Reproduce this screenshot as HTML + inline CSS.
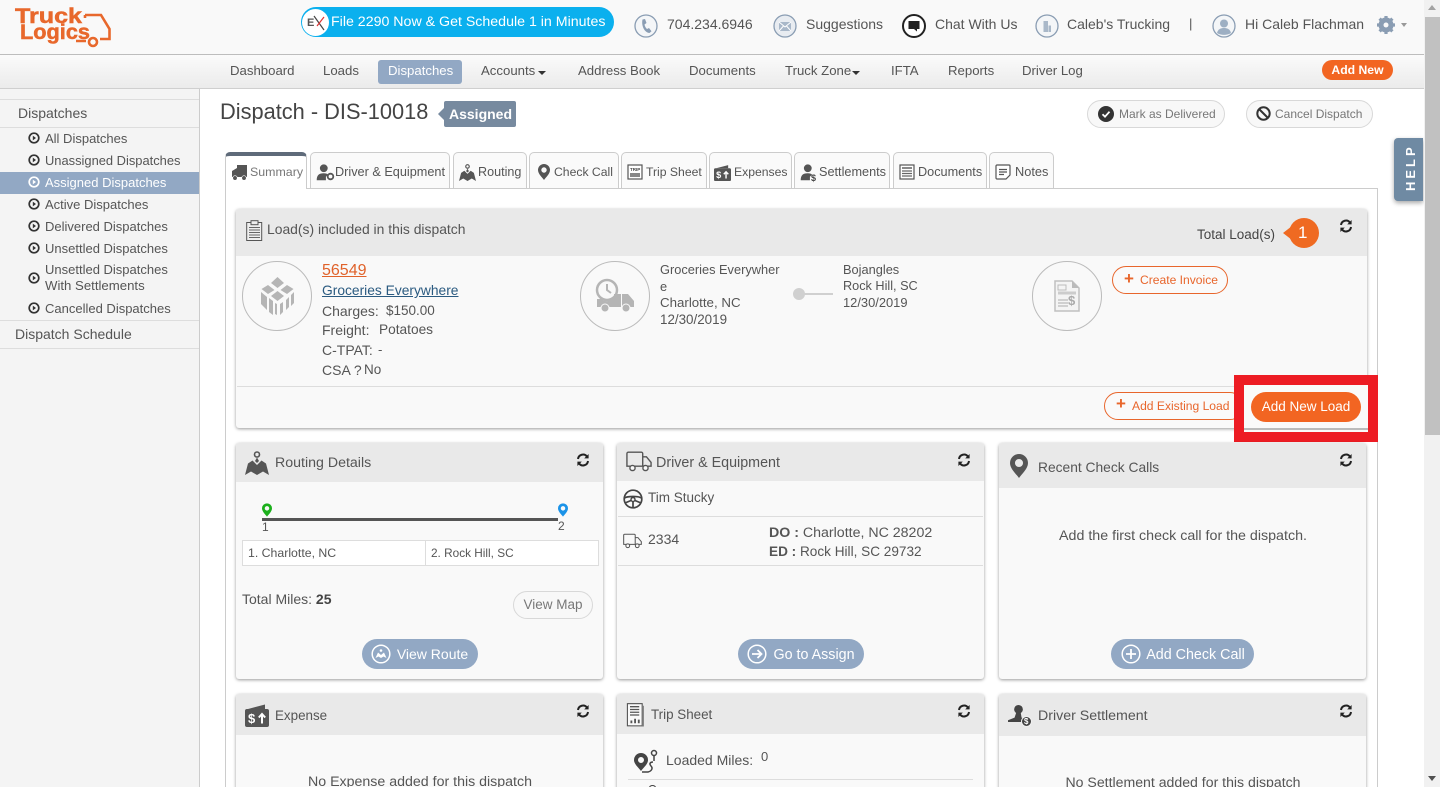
<!DOCTYPE html>
<html><head><meta charset="utf-8"><title>Dispatch - DIS-10018</title>
<style>
html,body{margin:0;padding:0;width:1440px;height:787px;overflow:hidden;background:#fff}
body{position:relative;font-family:"Liberation Sans",sans-serif;font-size:13.2px;color:#555}
.a{position:absolute;box-sizing:border-box}
.t{position:absolute;white-space:nowrap;line-height:20px;height:20px;color:#555;margin-top:1px}
.h{font-size:14px}
.c{text-align:center;transform:translateX(-50%)}
.line{position:absolute;height:1px;background:#ddd}
.tab{position:absolute;top:152px;height:36px;box-sizing:border-box;border:1px solid #ccc;border-bottom:0;border-radius:5px 5px 0 0;background:#fafafa}
.card{position:absolute;background:#f9f9f9;border-radius:3px;box-shadow:0 1px 3px rgba(0,0,0,.4)}
.head{position:absolute;left:0;top:0;right:0;background:#e9e9e9;border-radius:3px 3px 0 0}
.pill{position:absolute;box-sizing:border-box;border-radius:16px;text-align:center;white-space:nowrap}
.blue{background:#92a8c4;color:#fff;font-size:14.3px;line-height:31px;height:30px;top:639px}
.outl{border:1px solid #e8662c;background:#fafafa;color:#e8662c;font-size:12.1px;line-height:26px;height:28px}
.grey{border:1px solid #d8d8d8;background:#f8f8f8;color:#777;font-size:12px;line-height:26px;height:28px;text-align:left}
svg{position:absolute;overflow:visible}
</style></head><body>
<svg width="0" height="0" style="position:absolute"><defs>
<symbol id="sync" viewBox="0 0 14 14"><path d="M2 6A5 5 0 0 1 11 3.600M12 8A5 5 0 0 1 3 10.400" fill="none" stroke="#222" stroke-width="2"/><path d="M12.600 1v4.400H8.200zM1.400 13V8.600h4.400z" fill="#222"/></symbol>
<symbol id="play" viewBox="0 0 12 12"><circle cx="6" cy="6" r="4.800" fill="none" stroke="currentColor" stroke-width="1.700"/><path d="M4.800 3.600 8 6 4.800 8.400z" fill="currentColor"/></symbol>
<symbol id="pin" viewBox="0 0 12 16"><path fill-rule="evenodd" d="M6 0a6 6 0 0 1 6 6c0 3.800-4 7.200-6 10C4 13.200 0 9.800 0 6a6 6 0 0 1 6-6zm0 3.300a2.700 2.700 0 1 0 0 5.400 2.700 2.700 0 0 0 0-5.400z" fill="currentColor"/></symbol>
<symbol id="map" viewBox="0 0 24 24"><circle cx="12" cy="3.500" r="2.500" fill="none" stroke="currentColor" stroke-width="1.600"/><path d="M12 6.500 14 10l-2 2-2-2zM0 24 3 12.500 7.500 9.500 12 14l4.500-4.500L21 12.500 24 24l-6-3.500-6 3.500-6-3.500z" fill="currentColor"/></symbol>
<symbol id="truckO" viewBox="0 0 28 22"><path d="M2.500 1h14a1.500 1.500 0 0 1 1.500 1.500V16H1V2.500A1.500 1.500 0 0 1 2.500 1zM18 6h4l5 6v4h-9" fill="none" stroke="#555" stroke-width="1.500"/><circle cx="7" cy="18" r="2.800" fill="#f9f9f9" stroke="#555" stroke-width="1.500"/><circle cx="21" cy="18" r="2.800" fill="#f9f9f9" stroke="#555" stroke-width="1.500"/></symbol>
<symbol id="exp" viewBox="0 0 24 24"><path d="M3 6 20 1.500V6z" fill="#555"/><rect x="0" y="6" width="24" height="18" rx="2" fill="#555"/><text x="3" y="20" font-family="Liberation Sans" font-weight="bold" font-size="13" fill="#fff">$</text><path d="M17 20.500V11.500M13.800 14.500l3.200-3.500 3.200 3.500" fill="none" stroke="#fff" stroke-width="2"/></symbol>
<symbol id="sheet" viewBox="0 0 20 26"><rect x=".7" y=".7" width="16" height="24" fill="#f9f9f9" stroke="#555" stroke-width="1.200"/><path d="M3.500 4h10M3.500 7h10M3.500 10h10M3.500 13h10" stroke="#555" stroke-width="1.400"/><path d="M4 22v-3h2v3zM8 22v-5h2v5zM12 22v-4h2v4z" fill="#555"/><path d="M18 3v22H4" fill="none" stroke="#777"/></symbol>
<symbol id="person" viewBox="0 0 24 24"><circle cx="11" cy="6" r="5.500" fill="currentColor"/><path d="M1 23c0-7 3-10 10-10 3 0 5 .6 6 2l-3 3v5z" fill="currentColor"/></symbol>
</defs></svg>

<!-- header -->
<div class="a" style="left:0;top:0;width:1424px;height:54px;background:#f9f9f9"></div>
<div class="a" style="left:0;top:54px;width:1424px;height:1px;background:#bdbdbd"></div>
<div class="a" style="left:0;top:55px;width:1424px;height:33px;background:linear-gradient(#fbfbfb,#ebebeb)"></div>
<div class="a" style="left:0;top:88px;width:1424px;height:1px;background:#cfcfcf"></div>

<!-- logo -->
<svg style="left:14px;top:5px" width="98" height="46" viewBox="0 0 98 46">
<path d="M71 10H87L95.500 24V34H86M72 36H62M71 10v3" fill="none" stroke="#e8682c" stroke-width="2.600"/>
<circle cx="79" cy="37" r="4" fill="#f9f9f9" stroke="#e8682c" stroke-width="2.600"/>
<text x="1" y="18" font-family="Liberation Sans" font-weight="bold" font-size="21" fill="#e8682c" stroke="#e8682c" stroke-width=".5" textLength="67" lengthAdjust="spacingAndGlyphs">Truck</text>
<text x="6" y="34" font-family="Liberation Sans" font-weight="bold" font-size="21" fill="#e8682c" stroke="#e8682c" stroke-width=".5" textLength="70" lengthAdjust="spacingAndGlyphs">Logics</text>
</svg>

<!-- 2290 pill -->
<div class="a" style="left:301px;top:7px;width:313px;height:30px;border-radius:15px;background:#0bb0ee"></div>
<div class="a" style="left:302px;top:9px;width:27px;height:27px;border-radius:50%;background:#fff"></div>
<div class="t" style="left:307px;top:12px;font-size:11px;color:#555;font-weight:bold">E</div>
<svg style="left:313px;top:15px" width="13" height="16" viewBox="0 0 13 16"><path d="M1 1 11 15" stroke="#444" stroke-width="1.200"/><path d="M11 2 4 11" stroke="#d33" stroke-width="1.200"/></svg>
<div class="t" style="left:331px;top:11px;color:#fff;font-size:14.2px">File 2290 Now &amp; Get Schedule 1 in Minutes</div>

<!-- top icons -->
<svg style="left:634px;top:14px" width="24" height="24" viewBox="0 0 24 24"><circle cx="12" cy="12" r="11" fill="#f4f6f8" stroke="#8a9db3" stroke-width="1.300"/><path d="M8.500 5.500 11 5l1.500 4-2 1.500c.4 2 1.300 3.400 2.500 4.500l2-1 2.500 3.300-2 1.700C11 19 7 12 8.500 5.500z" fill="#8a9db3"/></svg>
<div class="t h" style="left:667px;top:13px">704.234.6946</div>
<svg style="left:773px;top:14px" width="24" height="24" viewBox="0 0 24 24"><circle cx="12" cy="12" r="11" fill="#e8ecf1" stroke="#8a9db3" stroke-width="1.300"/><rect x="6" y="8" width="12" height="9" fill="#a9b8c9"/><path d="M6 8l6 5 6-5M6 17l4.500-5M18 17l-4.500-5" fill="none" stroke="#fff"/></svg>
<div class="t h" style="left:806px;top:13px">Suggestions</div>
<svg style="left:902px;top:14px" width="24" height="24" viewBox="0 0 24 24"><circle cx="12" cy="12" r="11" fill="#fff" stroke="#222" stroke-width="2"/><path d="M6.500 7h11v8h-2.500v2.500L12 15H6.500z" fill="#222"/></svg>
<div class="t h" style="left:935px;top:13px">Chat With Us</div>
<svg style="left:1035px;top:14px" width="24" height="24" viewBox="0 0 24 24"><circle cx="12" cy="12" r="11" fill="#f4f6f8" stroke="#8a9db3" stroke-width="1.300"/><path d="M8.500 7h4.500v11H8.500zM13.500 11.500h2.500V18h-2.500z" fill="#a9b8c9"/></svg>
<div class="t h" style="left:1067px;top:13px">Caleb's Trucking</div>
<div class="t" style="left:1189px;top:13px">|</div>
<svg style="left:1212px;top:14px" width="24" height="24" viewBox="0 0 24 24"><circle cx="12" cy="12" r="11" fill="#f4f6f8" stroke="#8a9db3" stroke-width="1.300"/><circle cx="12" cy="9.500" r="4" fill="#9dafc3"/><path d="M5 19c1-4 4-5 7-5s6 1 7 5c-4 2.500-10 2.500-14 0z" fill="#9dafc3"/></svg>
<div class="t h" style="left:1245px;top:13px">Hi Caleb Flachman</div>
<svg style="left:1376px;top:15px" width="20" height="20" viewBox="0 0 20 20"><circle cx="10" cy="10" r="5.500" fill="none" stroke="#8a9db3" stroke-width="4"/><path d="M10 1v18M1 10h18M3.600 3.600l12.800 12.800M16.400 3.600 3.600 16.400" stroke="#8a9db3" stroke-width="3.200"/><circle cx="10" cy="10" r="2.500" fill="#f9f9f9"/></svg>
<div class="a" style="left:1401px;top:23px;border:3.500px solid transparent;border-top:4px solid #999"></div>

<!-- nav -->
<div class="t" style="left:230px;top:60px">Dashboard</div>
<div class="t" style="left:323px;top:60px">Loads</div>
<div class="a" style="left:378px;top:60px;width:84px;height:24px;border-radius:3px;background:#92a8c4"></div>
<div class="t" style="left:388px;top:60px;color:#fff">Dispatches</div>
<div class="t" style="left:481px;top:60px">Accounts</div>
<div class="a" style="left:538px;top:71px;border:4.500px solid transparent;border-top:4px solid #333"></div>
<div class="t" style="left:578px;top:60px">Address Book</div>
<div class="t" style="left:689px;top:60px">Documents</div>
<div class="t" style="left:785px;top:60px">Truck Zone</div>
<div class="a" style="left:852px;top:71px;border:4.500px solid transparent;border-top:4px solid #333"></div>
<div class="t" style="left:891px;top:60px">IFTA</div>
<div class="t" style="left:948px;top:60px">Reports</div>
<div class="t" style="left:1022px;top:60px">Driver Log</div>
<div class="pill" style="left:1322px;top:60px;width:71px;height:20px;background:#f26522;color:#fff;line-height:20px;font-size:12.2px;font-weight:bold">Add New</div>

<!-- sidebar -->
<div class="a" style="left:0;top:89px;width:200px;height:698px;background:#f4f4f4;border-right:1px solid #ccc"></div>
<div class="line" style="left:0;top:99px;width:199px"></div>
<div class="line" style="left:0;top:127px;width:199px"></div>
<div class="line" style="left:0;top:320px;width:199px"></div>
<div class="line" style="left:0;top:348px;width:199px"></div>
<div class="t h" style="left:18px;top:102px">Dispatches</div>
<div class="a" style="left:0;top:172px;width:199px;height:22px;background:#92a8c4"></div>
<svg style="left:28px;top:132px;color:#333" width="12" height="12"><use href="#play"/></svg><div class="t" style="left:45px;top:128px;font-size:13px">All Dispatches</div>
<svg style="left:28px;top:154px;color:#333" width="12" height="12"><use href="#play"/></svg><div class="t" style="left:45px;top:150px;font-size:12.9px">Unassigned Dispatches</div>
<svg style="left:28px;top:176px;color:#fff" width="12" height="12"><use href="#play"/></svg><div class="t" style="left:45px;top:172px;font-size:13px;color:#fff">Assigned Dispatches</div>
<svg style="left:28px;top:198px;color:#333" width="12" height="12"><use href="#play"/></svg><div class="t" style="left:45px;top:194px;font-size:13px">Active Dispatches</div>
<svg style="left:28px;top:220px;color:#333" width="12" height="12"><use href="#play"/></svg><div class="t" style="left:45px;top:216px;font-size:13px">Delivered Dispatches</div>
<svg style="left:28px;top:242px;color:#333" width="12" height="12"><use href="#play"/></svg><div class="t" style="left:45px;top:238px;font-size:13px">Unsettled Dispatches</div>
<svg style="left:28px;top:272px;color:#333" width="12" height="12"><use href="#play"/></svg><div class="t" style="left:45px;top:259px;font-size:13px">Unsettled Dispatches</div><div class="t" style="left:45px;top:275px;font-size:13.2px">With Settlements</div>
<svg style="left:28px;top:302px;color:#333" width="12" height="12"><use href="#play"/></svg><div class="t" style="left:45px;top:298px;font-size:13px">Cancelled Dispatches</div>
<div class="t h" style="left:15px;top:323px">Dispatch Schedule</div>

<!-- title -->
<div class="t" style="left:220px;top:101px;font-size:21.8px;color:#444">Dispatch - DIS-10018</div>
<div class="a" style="left:444px;top:101px;width:72px;height:26px;background:#778a9f;border-radius:2px"></div>
<div class="a" style="left:438px;top:108px;border:6px solid transparent;border-right:6px solid #778a9f;border-left:0"></div>
<div class="t" style="left:449px;top:103px;color:#fff;font-size:14px;font-weight:bold">Assigned</div>
<div class="pill grey" style="left:1087px;top:100px;width:138px;padding-left:31px">Mark as Delivered</div>
<svg style="left:1098px;top:106px" width="16" height="16" viewBox="0 0 16 16"><circle cx="8" cy="8" r="8" fill="#333"/><path d="M4.500 8.200 7 10.700l4.500-5" fill="none" stroke="#fff" stroke-width="1.800"/></svg>
<div class="pill grey" style="left:1246px;top:100px;width:127px;padding-left:28px">Cancel Dispatch</div>
<svg style="left:1256px;top:106px" width="15" height="15" viewBox="0 0 15 15"><circle cx="7.500" cy="7.500" r="6.200" fill="none" stroke="#333" stroke-width="2"/><path d="M3 3l9 9" stroke="#333" stroke-width="2"/></svg>

<!-- help -->
<div class="a" style="left:1394px;top:138px;width:29px;height:63px;background:#6f8aa3;border-radius:4px 0 0 4px;box-shadow:0 2px 5px rgba(0,0,0,.35)"></div>
<div class="t" style="left:1391px;top:160px;width:40px;text-align:center;color:#fff;font-weight:bold;font-size:13px;letter-spacing:3px;transform:rotate(-90deg)">HELP</div>

<!-- pane -->
<div class="a" style="left:225px;top:188px;width:1153px;height:610px;border:1px solid #ccc;background:#fff"></div>

<!-- tabs -->
<div class="tab" style="left:225px;width:82px;background:#fff;border-top:4px solid #5f6b7a;height:37px"></div>
<div class="tab" style="left:310px;width:140px"></div>
<div class="tab" style="left:453px;width:74px"></div>
<div class="tab" style="left:529px;width:90px"></div>
<div class="tab" style="left:621px;width:86px"></div>
<div class="tab" style="left:709px;width:83px"></div>
<div class="tab" style="left:794px;width:96px"></div>
<div class="tab" style="left:893px;width:94px"></div>
<div class="tab" style="left:989px;width:65px"></div>
<svg style="left:231px;top:164px" width="17" height="17" viewBox="0 0 17 17"><path d="M6 1h10v12H1V7l5-3z" fill="#555"/><circle cx="4" cy="14" r="2.300" fill="#555" stroke="#fff" stroke-width=".7"/><circle cx="13" cy="14" r="2.300" fill="#555" stroke="#fff" stroke-width=".7"/></svg>
<div class="t" style="left:250px;top:161px;font-size:12.4px;color:#777">Summary</div>
<svg style="left:316px;top:164px;color:#555" width="17" height="17"><use href="#person"/></svg><svg style="left:326px;top:172px" width="9" height="9" viewBox="0 0 9 9"><circle cx="4.500" cy="4.500" r="2.800" fill="none" stroke="#555" stroke-width="1.800"/></svg>
<div class="t" style="left:335px;top:161px;font-size:12.7px">Driver &amp; Equipment</div>
<svg style="left:459px;top:164px;color:#555" width="17" height="17"><use href="#map"/></svg>
<div class="t" style="left:478px;top:161px;font-size:12.6px">Routing</div>
<svg style="left:538px;top:164px;color:#555" width="12" height="16"><use href="#pin"/></svg>
<div class="t" style="left:554px;top:161px;font-size:12.2px">Check Call</div>
<svg style="left:627px;top:164px" width="16" height="16" viewBox="0 0 16 16"><rect x="1" y="1" width="14" height="14" fill="#fff" stroke="#555" stroke-width="1.200"/><path d="M3 9h10v4H3z" fill="#888"/><text x="3" y="7" font-family="Liberation Sans" font-weight="bold" font-size="4.500" fill="#444">TRIP</text></svg>
<div class="t" style="left:646px;top:161px;font-size:12.2px">Trip Sheet</div>
<svg style="left:714px;top:164px" width="17" height="17"><use href="#exp"/></svg>
<div class="t" style="left:734px;top:161px;font-size:12.2px">Expenses</div>
<svg style="left:800px;top:164px;color:#555" width="17" height="17"><use href="#person"/></svg><div class="t" style="left:811px;top:167px;font-size:9px;font-weight:bold;color:#444">$</div>
<div class="t" style="left:819px;top:161px;font-size:12.7px">Settlements</div>
<svg style="left:899px;top:164px" width="16" height="16" viewBox="0 0 16 16"><rect x="1" y="1" width="14" height="14" fill="#fff" stroke="#555" stroke-width="1.200"/><path d="M3 7h10M3 9.500h10M3 12h10" stroke="#666" stroke-width="1.300"/><path d="M3 3h10v2H3z" fill="#888"/></svg>
<div class="t" style="left:918px;top:161px;font-size:12.7px">Documents</div>
<svg style="left:995px;top:164px" width="16" height="16" viewBox="0 0 16 16"><path d="M2 1h12a1 1 0 0 1 1 1v9l-4 4H2a1 1 0 0 1-1-1V2a1 1 0 0 1 1-1z" fill="#fff" stroke="#555" stroke-width="1.200"/><path d="M4 5.500h8M4 8h8M4 10.500h5" stroke="#555" stroke-width="1.200"/></svg>
<div class="t" style="left:1015px;top:161px;font-size:12.8px">Notes</div>

<!-- card 1 -->
<div class="card" style="left:236px;top:209px;width:1131px;height:219px"><div class="head" style="height:47px"></div></div>
<svg style="left:246px;top:220px" width="17" height="21" viewBox="0 0 17 21"><rect x=".7" y="2.500" width="15" height="18" fill="#eee" stroke="#555"/><rect x="5" y=".7" width="7" height="4" fill="#eee" stroke="#555"/><path d="M3 7.500h11M3 10h11M3 12.500h11M3 15h11M3 17.500h11" stroke="#666"/></svg>
<div class="t" style="left:267px;top:218px;font-size:13.9px">Load(s) included in this dispatch</div>
<div class="t" style="left:1197px;top:224px;color:#444;font-size:13.5px">Total Load(s)</div>
<div class="a" style="left:1289px;top:218px;width:30px;height:30px;border-radius:50%;background:#ef6a22"></div>
<div class="a" style="left:1283px;top:226px;border:7px solid transparent;border-right:9px solid #ef6a22;border-left:0"></div>
<div class="t" style="left:1298px;top:222px;color:#fff;font-size:17px">1</div>
<svg style="left:1339px;top:219px" width="14" height="14"><use href="#sync"/></svg>

<div class="a" style="left:242px;top:261px;width:70px;height:70px;border-radius:50%;border:1px solid #bbb"></div>
<svg style="left:260px;top:277px" width="35" height="38" viewBox="0 0 35 38"><path d="M17.500 0 24 6l-6.500 5L11 6zM8 8l6.500 5L8 17 1.500 12zM27 8l6.500 4-6.500 5-6.500-4zM17.500 14l6.500 5-6.500 5-6.500-5z" fill="#b5b5b5"/><path d="M1 15l6 5v13l-6-6zM9 21l4 3v14l-4-3zM15 26l2 1v11l-2-1zM20 27l3-2v10l-3 3zM26 23l3-3v10l-3 3zM31 18l3-3v11l-3 3z" fill="#b5b5b5"/></svg>
<div class="t" style="left:322px;top:260px;font-size:16px;color:#e0622a;text-decoration:underline">56549</div>
<div class="t" style="left:322px;top:280px;font-size:13.8px;color:#2a5a80;text-decoration:underline">Groceries Everywhere</div>
<div class="t" style="left:322px;top:300px;font-size:14px">Charges:</div><div class="t" style="left:386px;top:300px;font-size:13.5px">$150.00</div>
<div class="t" style="left:322px;top:319px;font-size:14px">Freight:</div><div class="t" style="left:379px;top:319px;font-size:13.7px">Potatoes</div>
<div class="t" style="left:322px;top:339px;font-size:14px">C-TPAT:</div><div class="t" style="left:378px;top:339px">-</div>
<div class="t" style="left:322px;top:359px;font-size:14px">CSA ?</div><div class="t" style="left:364px;top:359px;font-size:13.5px">No</div>

<div class="a" style="left:580px;top:261px;width:70px;height:70px;border-radius:50%;border:1px solid #bbb"></div>
<svg style="left:596px;top:279px" width="39" height="36" viewBox="0 0 39 36"><circle cx="11" cy="11" r="10" fill="#f9f9f9" stroke="#b5b5b5" stroke-width="2.500"/><path d="M11 5v6l4 3" fill="none" stroke="#b5b5b5" stroke-width="2"/><path d="M1 20h4c3 3 9 3 13-1v-4h7v13H1zM26 15h6l6 7v6H26z" fill="#b5b5b5"/><circle cx="9" cy="29" r="4" fill="#b5b5b5" stroke="#f9f9f9"/><circle cx="30" cy="29" r="4" fill="#b5b5b5" stroke="#f9f9f9"/></svg>
<div class="t" style="left:660px;top:259px;font-size:12.8px">Groceries Everywher</div>
<div class="t" style="left:660px;top:276px;font-size:12.8px">e</div>
<div class="t" style="left:660px;top:292px;font-size:13.3px">Charlotte, NC</div>
<div class="t" style="left:660px;top:309px;font-size:13.4px">12/30/2019</div>
<div class="a" style="left:793px;top:288px;width:12px;height:12px;border-radius:50%;background:#d0d0d0"></div>
<div class="a" style="left:800px;top:293px;width:33px;height:2px;background:#d0d0d0"></div>
<div class="t" style="left:843px;top:259px;font-size:12.8px">Bojangles</div>
<div class="t" style="left:843px;top:275px;font-size:12.7px">Rock Hill, SC</div>
<div class="t" style="left:843px;top:292px;font-size:12.9px">12/30/2019</div>

<div class="a" style="left:1032px;top:261px;width:70px;height:70px;border-radius:50%;border:1px solid #bbb"></div>
<svg style="left:1054px;top:280px" width="26" height="32" viewBox="0 0 26 32"><path d="M1 1h17l7 7v23H1z" fill="#f4f4f4" stroke="#c0c0c0" stroke-width="1.500"/><path d="M18 1v7h7z" fill="#bbb"/><rect x="4" y="5" width="8" height="5" fill="none" stroke="#bbb"/><path d="M4 13h18" stroke="#ccc" stroke-width="3"/><path d="M4 20h10M4 23h10M4 26h10" stroke="#bbb" stroke-width="1.300"/></svg>
<div class="t" style="left:1068px;top:290px;font-size:13px;font-weight:bold;color:#aaa">$</div>

<div class="pill outl" style="left:1112px;top:266px;width:116px;padding-left:27px;text-align:left">Create Invoice</div>
<div class="t" style="left:1124px;top:268px;color:#e8662c;font-size:17px;font-weight:bold">+</div>
<div class="line" style="left:237px;top:386px;width:1129px;background:#ddd"></div>
<div class="pill outl" style="left:1104px;top:392px;width:140px;text-align:left;padding-left:27px">Add Existing Load</div>
<div class="t" style="left:1116px;top:393px;color:#e8662c;font-size:17px;font-weight:bold">+</div>
<div class="a" style="left:1234px;top:375px;width:144px;height:67px;border:10px solid #ed1c24"></div>
<div class="a" style="left:1244px;top:385px;width:124px;height:47px;background:#fafafa"></div>
<div class="a" style="left:1244px;top:428px;width:124px;height:2px;background:#bbb"></div>
<div class="pill" style="left:1251px;top:392px;width:110px;height:30px;background:#f26522;color:#fff;line-height:29px;font-size:13.5px">Add New Load</div>

<!-- row 2 -->
<div class="card" style="left:236px;top:443px;width:367px;height:236px"><div class="head" style="height:39px"></div></div>
<svg style="left:245px;top:451px;color:#555" width="24" height="24"><use href="#map"/></svg>
<div class="t" style="left:275px;top:452px;font-size:14.2px">Routing Details</div>
<svg style="left:576px;top:453px" width="14" height="14"><use href="#sync"/></svg>
<svg style="left:262px;top:503px;color:#1cb01c" width="10" height="14"><use href="#pin"/></svg>
<svg style="left:558px;top:503px;color:#1b93e8" width="10" height="14"><use href="#pin"/></svg>
<div class="a" style="left:262px;top:518px;width:296px;height:3px;background:#555"></div>
<div class="t" style="left:262px;top:516px;font-size:12px">1</div>
<div class="t" style="left:558px;top:515px;font-size:12px">2</div>
<div class="a" style="left:242px;top:540px;width:357px;height:26px;border:1px solid #ddd;background:#fff"></div>
<div class="a" style="left:425px;top:540px;width:1px;height:26px;background:#ddd"></div>
<div class="t" style="left:248px;top:542px;font-size:12.3px">1. Charlotte, NC</div>
<div class="t" style="left:431px;top:542px;font-size:11.8px">2. Rock Hill, SC</div>
<div class="t" style="left:242px;top:588px;font-size:14px">Total Miles: <b style="color:#444">25</b></div>
<div class="pill grey" style="left:513px;top:591px;width:80px;font-size:13.5px;text-align:center">View Map</div>
<div class="pill blue" style="left:362px;width:116px;padding-left:25px;font-size:14px">View Route</div>
<svg style="left:371px;top:644px" width="20" height="20" viewBox="0 0 20 20"><circle cx="10" cy="10" r="8.800" fill="none" stroke="#fff" stroke-width="1.500"/><path d="M4.500 14 7 8.500l3 2.500 3-2.500 2.500 5.500-3-1.500-2.500 1.500-2.500-1.500z" fill="#fff"/><circle cx="10" cy="6.500" r="1.300" fill="#fff"/></svg>

<div class="card" style="left:617px;top:443px;width:367px;height:236px"><div class="head" style="height:38px"></div></div>
<svg style="left:626px;top:451px" width="26" height="21"><use href="#truckO"/></svg>
<div class="t" style="left:656px;top:452px;font-size:14.3px">Driver &amp; Equipment</div>
<svg style="left:957px;top:453px" width="14" height="14"><use href="#sync"/></svg>
<svg style="left:623px;top:489px" width="20" height="20" viewBox="0 0 20 20"><circle cx="10" cy="10" r="8.800" fill="none" stroke="#444" stroke-width="1.700"/><path d="M1.500 9c3-2 14-2 17 0M10 12v7M8 11.500 2 14M12 11.500l6 2.500" fill="none" stroke="#444" stroke-width="1.700"/><circle cx="10" cy="10.500" r="2" fill="none" stroke="#444" stroke-width="1.400"/></svg>
<div class="t" style="left:648px;top:487px;font-size:13.5px">Tim Stucky</div>
<div class="line" style="left:618px;top:516px;width:365px"></div>
<svg style="left:623px;top:533px" width="19" height="16"><use href="#truckO"/></svg>
<div class="t" style="left:648px;top:528px;font-size:14px">2334</div>
<div class="t" style="left:769px;top:522px;font-size:14.2px"><b style="font-weight:bold">DO :</b> Charlotte, NC 28202</div>
<div class="t" style="left:769px;top:541px;font-size:13.6px"><b style="font-weight:bold">ED :</b> Rock Hill, SC 29732</div>
<div class="line" style="left:618px;top:565px;width:365px"></div>
<div class="pill blue" style="left:738px;width:126px;padding-left:26px;line-height:32px">Go to Assign</div>
<svg style="left:747px;top:644px" width="20" height="20" viewBox="0 0 20 20"><circle cx="10" cy="10" r="8.800" fill="none" stroke="#fff" stroke-width="1.500"/><path d="M5 10h9M10.500 6l4 4-4 4" fill="none" stroke="#fff" stroke-width="1.800"/></svg>

<div class="card" style="left:999px;top:443px;width:367px;height:236px"><div class="head" style="height:45px"></div></div>
<svg style="left:1010px;top:453px;color:#555" width="18" height="26"><use href="#pin"/></svg>
<div class="t" style="left:1038px;top:457px;font-size:13.8px">Recent Check Calls</div>
<svg style="left:1339px;top:453px" width="14" height="14"><use href="#sync"/></svg>
<div class="t c" style="left:1183px;top:525px;font-size:14.25px">Add the first check call for the dispatch.</div>
<div class="pill blue" style="left:1111px;width:143px;padding-left:26px;line-height:32px">Add Check Call</div>
<svg style="left:1121px;top:644px" width="20" height="20" viewBox="0 0 20 20"><circle cx="10" cy="10" r="8.800" fill="none" stroke="#fff" stroke-width="1.500"/><path d="M10 5v10M5 10h10" stroke="#fff" stroke-width="1.800"/></svg>

<!-- row 3 -->
<div class="card" style="left:236px;top:694px;width:367px;height:110px"><div class="head" style="height:41px"></div></div>
<svg style="left:245px;top:703px" width="24" height="24"><use href="#exp"/></svg>
<div class="t" style="left:275px;top:705px;font-size:13.4px">Expense</div>
<svg style="left:576px;top:704px" width="14" height="14"><use href="#sync"/></svg>
<div class="t c" style="left:420px;top:771px;font-size:14.2px">No Expense added for this dispatch</div>

<div class="card" style="left:617px;top:694px;width:367px;height:110px"><div class="head" style="height:40px"></div></div>
<svg style="left:626px;top:703px" width="20" height="24"><use href="#sheet"/></svg>
<div class="t" style="left:651px;top:704px;font-size:13.4px">Trip Sheet</div>
<svg style="left:957px;top:704px" width="14" height="14"><use href="#sync"/></svg>
<svg style="left:633px;top:749px" width="26" height="25" viewBox="0 0 26 25"><path fill-rule="evenodd" d="M8 4a7 7 0 0 1 7 7c0 4-4 7-7 11-3-4-7-7-7-11a7 7 0 0 1 7-7zm0 4a3 3 0 1 0 0 6 3 3 0 0 0 0-6z" fill="#444"/><circle cx="21" cy="4" r="2.500" fill="none" stroke="#444" stroke-width="1.500"/><path d="M21 7v5M20 13c-3 0-4 2-2 4s1 5-3 6H9" fill="none" stroke="#444" stroke-width="1.500"/></svg>
<div class="t" style="left:666px;top:749px;font-size:14px">Loaded Miles:</div>
<div class="t" style="left:761px;top:746px;font-size:13px">0</div>
<div class="line" style="left:628px;top:779px;width:345px"></div>
<div class="a" style="left:649px;top:785px;width:7px;height:5px;border-radius:50%;border:1.500px solid #444"></div>

<div class="card" style="left:999px;top:694px;width:367px;height:110px"><div class="head" style="height:42px"></div></div>
<svg style="left:1008px;top:703px;color:#444" width="21" height="24" viewBox="0 0 24 24"><circle cx="12" cy="5.500" r="5" fill="currentColor"/><path d="M9.500 9h5l1 6 5 2v3H0v-2l7.500-3z" fill="currentColor"/></svg>
<svg style="left:1021px;top:716px" width="11" height="11" viewBox="0 0 11 11"><circle cx="5.500" cy="5.500" r="5" fill="#444" stroke="#f0f0f0"/></svg><div class="t" style="left:1024px;top:711px;font-size:8px;color:#fff;font-weight:bold">$</div>
<div class="t" style="left:1038px;top:705px;font-size:14.2px">Driver Settlement</div>
<svg style="left:1339px;top:704px" width="14" height="14"><use href="#sync"/></svg>
<div class="t c" style="left:1183px;top:771px;font-size:14.1px">No Settlement added for this dispatch</div>

<!-- scrollbar -->
<div class="a" style="left:1424px;top:0;width:16px;height:787px;background:#f1f1f1"></div>
<div class="a" style="left:1425px;top:17px;width:15px;height:418px;background:#c1c1c1"></div>
<div class="a" style="left:1428px;top:5px;border:4px solid transparent;border-bottom:5px solid #a3a3a3;border-top:0"></div>
<div class="a" style="left:1428px;top:776px;border:4px solid transparent;border-top:5px solid #505050;border-bottom:0"></div>
</body></html>
